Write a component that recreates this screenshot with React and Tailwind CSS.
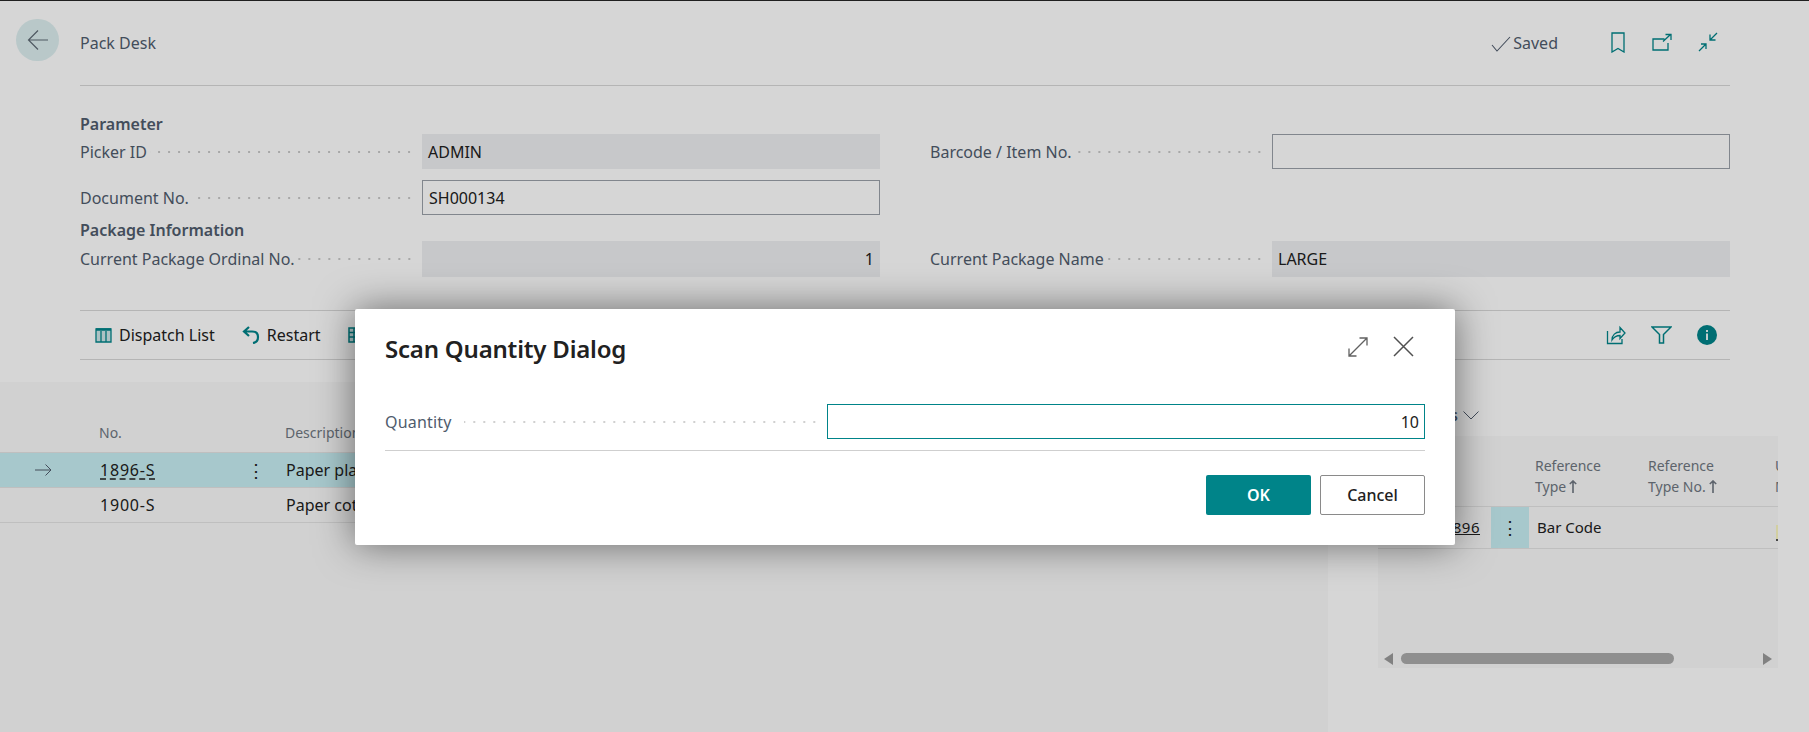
const font = { fontFamily: '"Noto Sans", sans-serif' };

function Leader() {
  return <div className="flex-1 h-[4px] ml-[3px] bg-[radial-gradient(circle,#c9c9c9_1px,transparent_1.4px)] bg-[length:10px_4px] bg-repeat-x bg-right" />;
}

function Field({ label, value, kind, right }) {
  const box = kind === 'input' ? 'border border-[#9aa0a8]' : 'bg-[#eeeff1]';
  return (
    <div className="flex items-center">
      <div className="w-[342px] flex items-center pr-[8px]">
        <span className="text-[16px] text-[#505c6d] whitespace-nowrap">{label}</span>
        <Leader />
      </div>
      <div className={`flex-1 h-full flex items-center px-[6px] text-[16px] text-[#212121] ${box} ${right ? 'justify-end' : ''}`}>
        {value}
      </div>
    </div>
  );
}

function BackArrow() {
  return (
    <svg width="22" height="22" viewBox="0 0 22 22" fill="none" stroke="#5f6b75" strokeWidth="1.2">
      <path d="M21 11H1.500M11 1.500 1.500 11l9.500 9.500" />
    </svg>
  );
}

function TealIcon({ children, w = 20, h = 20 }) {
  return (
    <svg width={w} height={h} viewBox={`0 0 ${w} ${h}`} fill="none" stroke="#008489" strokeWidth="1.3">
      {children}
    </svg>
  );
}

function ActionItem({ icon, label }) {
  return (
    <div className="flex items-center gap-[7px] text-[16px] text-[#212121]">
      {icon}
      {label && <span>{label}</span>}
    </div>
  );
}

function Row({ no, desc, selected }) {
  return (
    <div className={`flex items-center h-[35px] border-b border-[#e4e4e4] text-[16px] text-[#212121] ${selected ? 'bg-[#c8eff3]' : ''}`}>
      <div className="w-[100px] pl-[35px]">
        {selected && (
          <svg width="17" height="12" viewBox="0 0 17 12" fill="none" stroke="#505c6d" strokeWidth="1">
            <path d="M0 6h16M10.500.5 16 6l-5.500 5.500" />
          </svg>
        )}
      </div>
      <div className="w-[137px]">
        <span className={`tracking-[0.8px] ${selected ? 'underline decoration-dashed underline-offset-[3px]' : ''}`}>{no}</span>
      </div>
      <div className="w-[38px] mr-[11px] flex justify-center text-[18px] leading-none">{selected ? '⋮' : ''}</div>
      <div>{desc}</div>
    </div>
  );
}

function SortHead({ line1, line2, width }) {
  return (
    <div className={`${width} shrink-0 text-[14px] leading-[21px] text-[#6f7781]`}>
      <div>{line1}</div>
      <div className="flex items-center gap-[3px]">
        {line2}
        <svg width="8" height="13" viewBox="0 0 8 13" fill="none" stroke="#6f7781" strokeWidth="1.600">
          <path d="M4 13V1M.8 4 4 1l3.200 3" />
        </svg>
      </div>
    </div>
  );
}

function Dialog() {
  return (
    <div className="absolute left-[355px] top-[309px] w-[1100px] h-[236px] bg-white rounded-[2px] shadow-[0_0_38px_rgba(0,0,0,0.5)] px-[30px] z-20">
      <div className="h-[83px] flex items-center justify-between">
        <div className="text-[24px] font-semibold text-[#212121] tracking-[-0.2px] pb-[3px]">Scan Quantity Dialog</div>
        <div className="flex items-center gap-[25px] pr-[11px] pb-[8px]">
          <svg width="20" height="20" viewBox="0 0 20 20" fill="none" stroke="#616161" strokeWidth="1.300">
            <path d="M1 19 19 1M11.500 1H19V8.500M1 11.500V19H8.500" />
          </svg>
          <svg width="21" height="21" viewBox="0 0 21 21" fill="none" stroke="#505050" strokeWidth="1.500">
            <path d="M1 1l19 19M20 1 1 20" />
          </svg>
        </div>
      </div>
      <div className="flex items-center h-[35px] mt-[12px]">
        <span className="text-[16px] tracking-[0.2px] text-[#505c6d]">Quantity</span>
        <div className="flex-1 h-[4px] ml-[12px] mr-[8px] bg-[radial-gradient(circle,#d0d0d0_1px,transparent_1.4px)] bg-[length:10px_4px] bg-repeat-x bg-right" />
        <div className="w-[598px] h-full border border-[#008489] flex items-center justify-end px-[5px] text-[16px] text-[#212121]">10</div>
      </div>
      <div className="border-b border-[#cfcfcf] mt-[11px]" />
      <div className="flex justify-end gap-[9px] mt-[24px]">
        <div className="w-[105px] h-[40px] rounded-[2px] bg-[#008489] text-white text-[16px] font-semibold flex items-center justify-center">OK</div>
        <div className="w-[105px] h-[40px] rounded-[2px] border border-[#8a8a8a] text-[#212121] text-[16px] font-medium flex items-center justify-center">Cancel</div>
      </div>
    </div>
  );
}

export default function App() {
  return (
    <div className="relative w-[1809px] h-[732px] overflow-hidden bg-white" style={font}>
      <div className="h-px bg-[#262626]" />

      {/* page header */}
      <div className="flex pl-[16px] pr-[79px]">
        <div className="w-[43px] h-[42px] mt-[18px] mr-[21px] rounded-full bg-[#ddeff0] flex items-center justify-center">
          <BackArrow />
        </div>
        <div className="flex-1 h-[85px] border-b border-[#d8d8d8] flex justify-between items-start pt-[30px]">
          <span className="text-[16px] text-[#505c6d]">Pack Desk</span>
          <div className="flex items-start">
            <svg className="mt-[5px]" width="20" height="16" viewBox="0 0 20 16" fill="none" stroke="#505c6d" strokeWidth="1.100">
              <path d="M1 9l5 6L19 1" />
            </svg>
            <span className="text-[16px] text-[#505c6d] ml-[2px] mr-[53px]">Saved</span>
            <div className="mt-[1px]">
              <TealIcon w={14} h={21}>
                <path d="M1 1h12v19l-6-3.500L1 20z" />
              </TealIcon>
            </div>
            <div className="ml-[27px] mt-[2px]">
              <TealIcon w={20} h={18}>
                <path d="M12.500 6H1v11h15V10M11 8.500 18 2M13.500 1.500H19V7" />
              </TealIcon>
            </div>
            <div className="ml-[26px] mr-[12px] mt-[1px]">
              <TealIcon>
                <path d="M19 1l-7 7M12 2.500V8h5.500M1 19l7-7M8 17V12H3" />
              </TealIcon>
            </div>
          </div>
        </div>
      </div>

      {/* fields */}
      <div className="ml-[80px] mr-[79px] mt-[29px] grid grid-cols-2 gap-x-[50px] grid-rows-[19px_35px_11px_35px_26px_36px]">
        <div className="text-[16px] font-semibold text-[#505c6d] leading-[19px]">Parameter</div>
        <div />
        <Field label="Picker ID" value="ADMIN" />
        <Field label="Barcode / Item No." kind="input" />
        <div />
        <div />
        <Field label="Document No." value="SH000134" kind="input" />
        <div />
        <div className="text-[16px] font-semibold text-[#505c6d] leading-[19px] pt-[6px]">Package Information</div>
        <div />
        <Field label="Current Package Ordinal No." value="1" right />
        <Field label="Current Package Name" value="LARGE" />
      </div>

      {/* action bar */}
      <div className="ml-[80px] mr-[79px] mt-[33px] h-[50px] border-y border-[#d8d8d8] flex items-center justify-between pl-[15px] pr-[13px]">
        <div className="flex items-center gap-[27px]">
          <ActionItem
            label="Dispatch List"
            icon={
              <svg width="17" height="15" viewBox="0 0 17 15" fill="#cfe8ea" stroke="#008489" strokeWidth="1.300">
                <path d="M1 1h15v13H1z" />
                <path d="M1 1.500h15" strokeWidth="2.500" />
                <path d="M6 3V14M11 3V14" />
              </svg>
            }
          />
          <ActionItem
            label="Restart"
            icon={
              <svg width="18" height="18" viewBox="0 0 18 18" fill="none" stroke="#008489" strokeWidth="2.200">
                <path d="M7 1 2 5.500 7 10M2 5.500h8c3.500 0 6 2 6 5.500 0 3-2 5.500-5 6" />
              </svg>
            }
          />
          <ActionItem
            icon={
              <svg width="17" height="16" viewBox="0 0 17 16" fill="#cfe8ea" stroke="#008489" strokeWidth="1.500">
                <path d="M1 1h15v14H1zM1 5.500h15M1 10h15M6 1v14" />
              </svg>
            }
          />
        </div>
        <div className="flex items-center gap-[25px]">
          <TealIcon>
            <path d="M1.500 6V18.500H16V14M6 15c0-5 3.500-8 8-8V2.500l5 5.500-5 5.500V10.500c-3.500 0-6 1.500-8 4.500z" />
          </TealIcon>
          <svg width="21" height="18" viewBox="0 0 21 18" fill="none" stroke="#008489" strokeWidth="1.500">
            <path d="M1 1h19l-7.500 7.500V17h-4V8.500z" />
          </svg>
          <svg width="20" height="20" viewBox="0 0 20 20">
            <circle cx="10" cy="10" r="10" fill="#008489" />
            <rect x="9" y="8.500" width="2" height="6.500" fill="#e8f4f4" />
            <rect x="9" y="5" width="2" height="2" fill="#e8f4f4" />
          </svg>
        </div>
      </div>

      {/* lower part */}
      <div className="flex mt-[22px] h-[350px]">
        <div className="w-[1328px] shrink-0 bg-[#f9f9f9]">
          <div className="h-[71px] flex items-end pb-[9px] border-b border-[#e4e4e4] text-[14px] text-[#6f7781]">
            <div className="w-[99px]" />
            <div className="w-[186px]">No.</div>
            <div>Description</div>
          </div>
          <Row no="1896-S" desc="Paper plane" selected />
          <Row no="1900-S" desc="Paper cotton" />
        </div>

        <div className="w-[481px] shrink-0 pl-[50px] pr-[31px]">
          <div className="h-[54px] flex items-center pt-[12px] gap-[5px] pl-[1px]">
            <span className="text-[16px] font-semibold text-[#505c6d] w-[79px] text-right">Barcodes</span>
            <svg width="16" height="9" viewBox="0 0 16 9" fill="none" stroke="#505c6d" strokeWidth="1">
              <path d="M.5.500 8 8 15.500.500" />
            </svg>
          </div>
          <div className="h-[232px] bg-[#f9f9f9] overflow-hidden flex flex-col">
            <div className="h-[71px] flex items-end pb-[9px] border-b border-[#e4e4e4]">
              <div className="w-[157px] shrink-0" />
              <SortHead line1="Reference" line2="Type" width="w-[113px]" />
              <SortHead line1="Reference" line2="Type No." width="w-[127px]" />
              <div className="shrink-0 text-[14px] leading-[21px] text-[#6f7781]">
                <div>Unit</div>
                <div>Measure</div>
              </div>
            </div>
            <div className="h-[42px] flex items-center border-b border-[#e4e4e4] text-[15px] text-[#212121]">
              <div className="w-[102px] shrink-0 text-right underline tracking-[0.5px]">1896</div>
              <div className="w-[38px] ml-[11px] h-full shrink-0 bg-[#c8eff3] flex items-center justify-center text-[18px]">⋮</div>
              <div className="w-[247px] shrink-0 pl-[8px]">Bar Code</div>
              <div className="shrink-0 flex flex-col pt-[10px]">
                <div className="w-[2px] h-[14px] bg-[#fbf7c0]" />
                <div className="w-[2px] h-[2px] bg-[#555555]" />
              </div>
            </div>
            <div className="flex-1" />
            <div className="h-[19px] bg-[#f9f9f9] flex items-center pl-[6px] pr-[6px] gap-[8px]">
              <div className="w-0 h-0 border-y-[6px] border-y-transparent border-r-[9px] border-r-[#9a9a9a]" />
              <div className="flex-1">
                <div className="w-[273px] h-[11px] rounded-full bg-[#ababab]" />
              </div>
              <div className="w-0 h-0 border-y-[6px] border-y-transparent border-l-[9px] border-l-[#9a9a9a]" />
            </div>
          </div>
        </div>
      </div>

      <div className="absolute inset-0 bg-black/16 z-10" />
      <Dialog />
    </div>
  );
}
